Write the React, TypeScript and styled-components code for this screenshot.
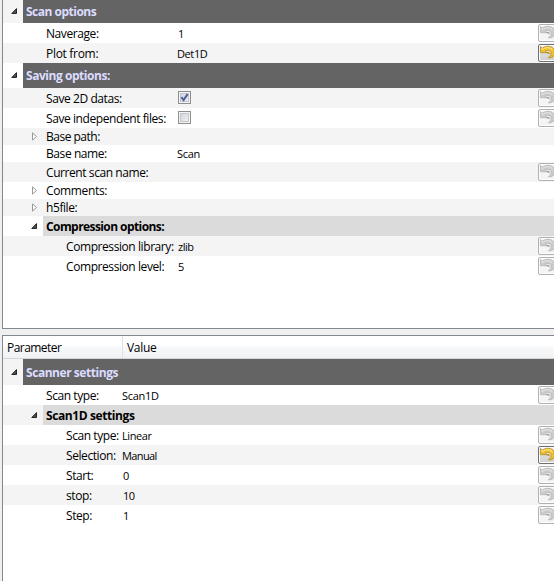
import React from "react";
import styled, { createGlobalStyle } from "styled-components";

const Global = createGlobalStyle`
  * { box-sizing: border-box; }
  html, body { margin: 0; background: #f0f0f0; overflow: hidden; }
`;

const Window = styled.main`
  width: 554px;
  height: 581px;
  padding-left: 2px;
  display: flex;
  flex-direction: column;
  gap: 6px;
  overflow: hidden;
  background: #f0f0f0;
  color: #000;
  font: 12px/16px "Open Sans", "Noto Sans", sans-serif;
`;

const Tree = styled.section<{ $height: number; $top?: boolean }>`
  height: ${(p) => p.$height}px;
  flex: none;
  overflow: hidden;
  background: #fff;
  border-left: 1px solid #828790;
  border-top: ${(p) => (p.$top ? "1px solid #828790" : "0")};
  border-bottom: ${(p) => (p.$top ? "0" : "1px solid #828790")};
`;

type Kind = "group" | "sub" | "item";

const Row = styled.div<{ $h: number; $alt: boolean }>`
  display: flex;
  height: ${(p) => p.$h}px;
  background: ${(p) => (p.$alt ? "#f4f4f4" : "#fff")};
`;

const Branch = styled.div<{ $depth: number }>`
  width: ${(p) => p.$depth * 20}px;
  flex: none;
  display: flex;
  align-items: center;
  justify-content: flex-end;
  padding: 0 5px 1px 0;
`;

const Content = styled.div<{ $kind: Kind }>`
  flex: 1;
  min-width: 0;
  display: flex;
  align-items: center;
  background: ${(p) => (p.$kind === "group" ? "#646464" : p.$kind === "sub" ? "#dbdbdb" : "transparent")};
  color: ${(p) => (p.$kind === "group" ? "#dcdcff" : "#000")};
  font-weight: ${(p) => (p.$kind === "item" ? 400 : 700)};
`;

const Label = styled.span<{ $width: number; $spacing: number; $shift: number }>`
  width: ${(p) => p.$width}px;
  flex: none;
  padding: ${(p) => p.$shift}px 0 0 3px;
  white-space: nowrap;
  letter-spacing: ${(p) => p.$spacing}px;
`;

const Value = styled.span<{ $indent: number; $spacing: number }>`
  flex: 1;
  padding-left: ${(p) => p.$indent}px;
  padding-top: 1px;
  font-size: 11px;
  letter-spacing: ${(p) => p.$spacing}px;
  white-space: nowrap;
`;

const Header = styled.div`
  display: flex;
  height: 23px;
  background: linear-gradient(#fff 0 45%, #f7f8fa 50%, #f1f2f4);
  border-bottom: 1px solid #d5d5d5;
`;

const HeaderCell = styled.div<{ $width?: number }>`
  width: ${(p) => (p.$width ? `${p.$width}px` : "auto")};
  padding: 4px 0 0 4px;
  border-right: ${(p) => (p.$width ? "1px solid #dfe1e5" : "0")};
  letter-spacing: ${(p) => (p.$width ? "-0.55px" : "-0.3px")};
`;

const ResetButton = styled.button<{ $active: boolean }>`
  width: 20px;
  height: 18px;
  margin: 1px -4px 0 0;
  align-self: flex-start;
  flex: none;
  padding: 0;
  border: 1px solid ${(p) => (p.$active ? "#707070" : "#adb2b5")};
  border-radius: 2px;
  background: ${(p) => (p.$active ? "linear-gradient(#f2f2f2 0 48%, #dddddd 50%, #cfcfcf)" : "#f4f4f4")};
  box-shadow: inset 0 0 0 1px #fcfcfc;
  svg { display: block; }
`;

const Box = styled.span`
  display: flex;
  width: 13px;
  height: 13px;
  margin-left: 1px;
  border: 1px solid #8e8f8f;
  background: linear-gradient(135deg, #cbcfd5, #f6f6f6);
  box-shadow: inset 0 0 0 1px #f4f4f4, inset 0 0 0 2px #c3c7cb;
`;

const CheckCell = styled.span`
  flex: 1;
  display: flex;
  padding-bottom: 2px;
`;

function Arrow({ open }: { open: boolean }) {
  return open ? (
    <svg width="7" height="6" viewBox="0 0 7 6">
      <path d="M5.5 .6V5.5H.8Z" fill="#505050" stroke="#262626" strokeWidth="1" />
    </svg>
  ) : (
    <svg width="6" height="9" viewBox="0 0 6 9">
      <path d="M.5 .9V8.1L4.5 4.5Z" fill="#fff" stroke="#989898" strokeWidth="1" />
    </svg>
  );
}

function Reset({ active }: { active: boolean }) {
  const edge = active ? "#a88326" : "#b0b0b0";
  const fill = active ? "#efbd2c" : "#cbcbcb";
  return (
    <ResetButton $active={active} aria-label="Reset to default">
      <svg width="18" height="16" viewBox="0 0 18 16">
        <path
          d="M1.4 1.4V7.7H8L6.4 6C9 4.7 11.9 5.7 12.1 8.3C12.2 10.2 11 11.8 9.2 12.7C13 13.4 16 11 16 7.4C16 1.4 8.2-.6 3.3 3.2Z"
          fill={fill} stroke={edge} strokeWidth=".7"
        />
        <path d="M2.2 3.4L3.5 4.5C7 1.7 11.6 2.2 13.6 5.2" fill="none" stroke={active ? "#ffe173" : "#e0e0e0"} strokeWidth="1.2" />
        <path d="M7.6 7.8C9 6.9 10.2 7.7 9.9 9" fill="none" stroke={active ? "#b78914" : "#a0a0a0"} strokeWidth="1.5" />
      </svg>
    </ResetButton>
  );
}

interface Item {
  label: string;
  h: number;
  depth?: number;
  kind?: Kind;
  open?: boolean;
  value?: string;
  indent?: number;
  check?: boolean;
  reset?: "on" | "off";
  spacing?: number;
  valueSpacing?: number;
  shift?: number;
}

const options: Item[] = [
  { label: "Scan options", h: 23, depth: 1, kind: "group", open: true, shift: 0, spacing: -0.5 },
  { label: "Naverage:", h: 20, value: "1", indent: 1, reset: "off" },
  { label: "Plot from:", h: 20, value: "Det1D", valueSpacing: -0.4, reset: "on", spacing: -0.3 },
  { label: "Saving options:", h: 25, depth: 1, kind: "group", open: true, spacing: -0.45 },
  { label: "Save 2D datas:", h: 20, check: true, reset: "off" },
  { label: "Save independent files:", h: 20, check: false, reset: "off" },
  { label: "Base path:", h: 17, open: false, spacing: -0.5 },
  { label: "Base name:", h: 17, value: "Scan" },
  { label: "Current scan name:", h: 20, reset: "off" },
  { label: "Comments:", h: 17, open: false, spacing: -0.35 },
  { label: "h5file:", h: 17, open: false },
  { label: "Compression options:", h: 20, kind: "sub", open: true, spacing: -0.58 },
  { label: "Compression library:", h: 20, depth: 3, value: "zlib", valueSpacing: -0.5, indent: 1, reset: "off" },
  { label: "Compression level:", h: 20, depth: 3, value: "5", indent: 1, reset: "off" },
];

const scanner: Item[] = [
  { label: "Scanner settings", h: 26, depth: 1, kind: "group", open: true, spacing: -0.45 },
  { label: "Scan type:", h: 20, value: "Scan1D", reset: "off" },
  { label: "Scan1D settings", h: 20, kind: "sub", open: true, spacing: -0.4 },
  { label: "Scan type:", h: 20, depth: 3, value: "Linear", valueSpacing: -0.4, reset: "off" },
  { label: "Selection:", h: 20, depth: 3, value: "Manual", valueSpacing: -0.6, reset: "on" },
  { label: "Start:", h: 20, depth: 3, value: "0", indent: 1, reset: "off" },
  { label: "stop:", h: 20, depth: 3, value: "10", indent: 1, valueSpacing: -0.6, reset: "off" },
  { label: "Step:", h: 20, depth: 3, value: "1", indent: 1, reset: "off" },
];

function Rows({ items, column }: { items: Item[]; column: number }) {
  return (
    <>
      {items.map((it, i) => {
        const depth = it.depth ?? 2;
        const kind = it.kind ?? "item";
        return (
          <Row key={i} $h={it.h} $alt={i % 2 === 0}>
            <Branch $depth={depth}>{it.open !== undefined && <Arrow open={it.open} />}</Branch>
            <Content $kind={kind}>
              <Label $width={column - depth * 20} $spacing={it.spacing ?? -0.42} $shift={it.shift ?? 1}>
                {it.label}
              </Label>
              {it.check !== undefined ? (
                <CheckCell>
                  <Box>
                    {it.check && (
                      <svg width="11" height="11" viewBox="0 0 11 11">
                        <path d="M2.4 5.1L4.6 8L8.6 2.1" fill="none" stroke="#4b609f" strokeWidth="2" />
                      </svg>
                    )}
                  </Box>
                </CheckCell>
              ) : (
                <Value $indent={it.indent ?? 0} $spacing={it.valueSpacing ?? -0.3}>{it.value}</Value>
              )}
              {it.reset && <Reset active={it.reset === "on"} />}
            </Content>
          </Row>
        );
      })}
    </>
  );
}

export default function App() {
  return (
    <Window>
      <Global />
      <Tree $height={329}>
        <Rows items={options} column={174} />
      </Tree>
      <Tree $height={246} $top>
        <Header>
          <HeaderCell $width={120}>Parameter</HeaderCell>
          <HeaderCell>Value</HeaderCell>
        </Header>
        <Rows items={scanner} column={119} />
      </Tree>
    </Window>
  );
}
